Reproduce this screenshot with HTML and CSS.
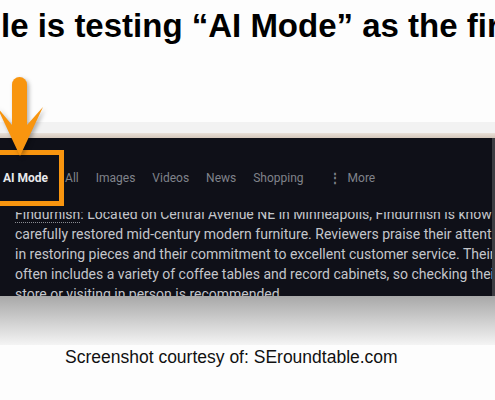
FILE: index.html
```html
<!DOCTYPE html>
<html lang="en">
<head>
    <meta charset="UTF-8">
    <meta name="viewport" content="width=device-width, initial-scale=1.0">
    <title>AI Mode tab</title>
    <link rel="stylesheet" href="styles.css">
</head>
<body>
    <div class="slide">
        <h1 class="headline">le is testing “AI Mode” as the first</h1>

        <div class="shot">
            <div class="shot-top"></div>
            <div class="shot-edge"></div>
            <div class="panel">
                <nav class="tabs">
                    <span class="tab active">AI Mode</span>
                    <span class="tab">All</span>
                    <span class="tab">Images</span>
                    <span class="tab">Videos</span>
                    <span class="tab">News</span>
                    <span class="tab">Shopping</span>
                    <span class="tab more"><span class="dots">⋮</span>More</span>
                </nav>
                <div class="answer">
                    <p><span class="cite">Findurnish</span>: Located on Central Avenue NE in Minneapolis, Findurnish is known for</p>
                    <p>carefully restored mid-century modern furniture. Reviewers praise their attention</p>
                    <p>in restoring pieces and their commitment to excellent customer service. Their inventory</p>
                    <p>often includes a variety of coffee tables and record cabinets, so checking their</p>
                    <p>store or visiting in person is recommended .</p>
                </div>
                <div class="highlight"></div>
            </div>
            <div class="fade"></div>
        </div>

        <p class="caption">Screenshot courtesy of: SEroundtable.com</p>

        <svg class="arrow" width="55" height="90" viewBox="0 0 55 90">
            <rect x="17" y="7" width="15" height="56" rx="7.5" fill="#f8950f"/>
            <polygon points="32,55 48,37 25,86 2,37 17,55" fill="#f8950f"/>
        </svg>
    </div>
</body>
</html>
```

FILE: styles.css
```css
body {
    margin: 0;
    background: #fdfdfd;
    font-family: 'Liberation Sans', Arial, sans-serif;
}

.slide {
    position: relative;
    width: 495px;
    height: 400px;
    overflow: hidden;
}

.headline {
    margin: 0;
    padding: 7px 0 0 1px;
    font-size: 33px;
    line-height: 38px;
    font-weight: bold;
    color: #000;
    white-space: nowrap;
    overflow: hidden;
}

.shot {
    margin-top: 77px;
}

.shot-top {
    height: 11px;
    background: #f2f2f2;
}

.shot-edge {
    height: 5px;
    background: linear-gradient(#e9e1d9, #d3c6ba);
}

.panel {
    position: relative;
    height: 158px;
    background: #0f1018;
    border-right: 3px solid #3c3d42;
    overflow: hidden;
    font-family: Roboto, 'Noto Sans', sans-serif;
}

.tabs {
    display: flex;
    align-items: center;
    gap: 17px;
    height: 68px;
    padding: 6px 0 0 3px;
    font-size: 12px;
    color: #80838b;
}

.tab.active {
    color: #e8e9ec;
    font-weight: bold;
}

.tab.more {
    display: flex;
    align-items: center;
    gap: 7px;
    margin-left: 8px;
}

.dots {
    font-weight: bold;
}

.answer {
    height: 84px;
    overflow: hidden;
    padding-left: 15px;
    color: #c4c6cb;
    font-size: 14px;
    line-height: 20px;
    white-space: nowrap;
}

.answer p {
    margin: 0;
}

.answer p:first-child {
    margin-top: -8px;
}

.cite {
    border-bottom: 1px dotted #8a8c92;
}

.highlight {
    position: absolute;
    left: -8px;
    top: 12px;
    width: 62px;
    height: 46px;
    border: 5px solid #f8950f;
}

.fade {
    height: 49px;
    background: linear-gradient(#a8a8a8, #f4f4f4);
}

.caption {
    margin: 2px 0 0;
    padding-left: 65px;
    font-size: 17.5px;
    line-height: 20px;
    color: #111;
}

.arrow {
    position: absolute;
    left: -5px;
    top: 70px;
    filter: drop-shadow(2px 2px 2px rgba(0, 0, 0, 0.3));
}
```
